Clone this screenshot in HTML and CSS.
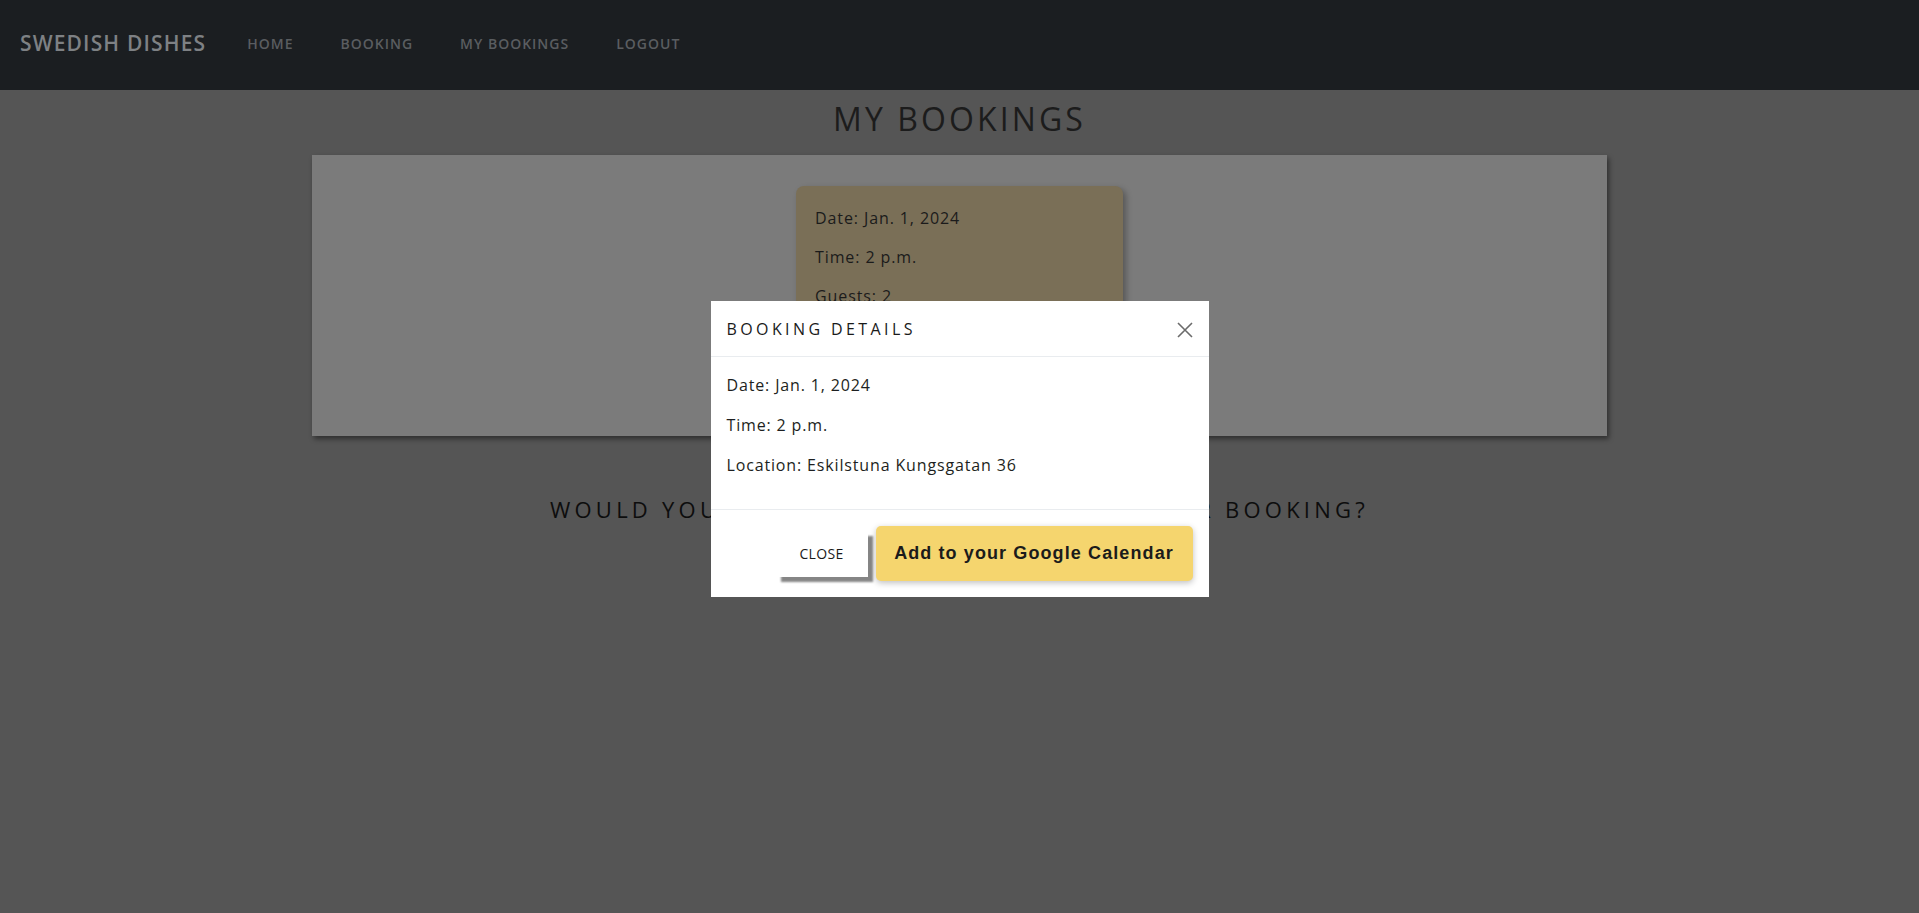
FILE: index.html
```html
<!DOCTYPE html>
<html lang="en">
<head>
<meta charset="utf-8">
<title>My Bookings - Swedish Dishes</title>
<link rel="stylesheet" href="styles.css">
</head>
<body>
<header class="navbar">
  <a class="brand" href="#">SWEDISH DISHES</a>
  <nav>
    <ul class="nav-links">
      <li><a href="#">Home</a></li>
      <li><a href="#">Booking</a></li>
      <li><a href="#">My Bookings</a></li>
      <li><a href="#">Logout</a></li>
    </ul>
  </nav>
</header>

<main class="main">
  <h1 class="page-title">MY BOOKINGS</h1>
  <section class="panel">
    <div class="booking-card">
      <p>Date: Jan. 1, 2024</p>
      <p>Time: 2 p.m.</p>
      <p>Guests: 2</p>
      <div class="card-actions">
        <button class="card-btn">Details</button>
      </div>
    </div>
  </section>
  <h2 class="sub-title">WOULD YOU LIKE TO CHANGE OR CANCEL YOUR BOOKING?</h2>
</main>

<div class="modal" role="dialog" aria-labelledby="modal-title">
  <div class="modal-header">
    <h5 class="modal-title" id="modal-title">BOOKING DETAILS</h5>
    <button class="btn-close" aria-label="Close">
      <svg width="16" height="16" viewBox="0 0 16 16"><path d="M1 1L15 15M15 1L1 15" stroke="#6b6b6b" stroke-width="1.6" fill="none"/></svg>
    </button>
  </div>
  <div class="modal-body">
    <p>Date: Jan. 1, 2024</p>
    <p>Time: 2 p.m.</p>
    <p>Location: Eskilstuna Kungsgatan 36</p>
  </div>
  <div class="modal-footer">
    <button class="btn-close-text">CLOSE</button>
    <button class="btn-google">Add to your Google Calendar</button>
  </div>
</div>
</body>
</html>
```
FILE: styles.css
```css
* { box-sizing: border-box; }
html, body { height: 100%; }
body {
  margin: 0;
  background: #555555;
  font-family: "Open Sans", "Noto Sans", sans-serif;
  color: #1a1a1a;
  overflow: hidden;
}

.navbar {
  height: 90px;
  background: #1b1e21;
  display: flex;
  align-items: center;
  padding-left: 20px;
  padding-bottom: 4px;
}
.brand {
  color: #7e8184;
  font-size: 21px;
  text-decoration: none;
  letter-spacing: 1.15px;
  font-weight: 600;
}
.nav-links {
  list-style: none;
  margin: 0 0 0 41px;
  padding: 0;
  display: flex;
  gap: 47px;
}
.nav-links a {
  color: #5a5d60;
  text-decoration: none;
  text-transform: uppercase;
  font-size: 14px;
  font-weight: 600;
  letter-spacing: 1px;
}

.main {
  padding-top: 8px;
}
.page-title {
  margin: 0;
  text-align: center;
  font-size: 32px;
  line-height: 42px;
  font-weight: 400;
  letter-spacing: 3.1px;
  color: #1c1c1c;
}
.panel {
  width: 1295px;
  margin: 15px auto 0;
  background: #7b7b7b;
  padding: 31px 0;
  box-shadow: 2px 3px 5px rgba(0,0,0,0.45);
}
.booking-card {
  width: 327px;
  margin: 0 auto;
  background: #7a6f57;
  border-radius: 8px;
  padding: 20px 19px;
  box-shadow: 3px 3px 6px rgba(0,0,0,0.3);
  height: 219px;
}
.booking-card p {
  margin: 0 0 15px;
  font-size: 16px;
  line-height: 24px;
  letter-spacing: 0.9px;
  color: #1b1b1b;
}
.card-btn {
  font: inherit;
  border: 0;
  background: transparent;
}
.sub-title {
  margin: 60px 0 0;
  text-align: center;
  font-size: 22px;
  line-height: 26px;
  font-weight: 400;
  letter-spacing: 4.25px;
  color: #0d0d0d;
}

.modal {
  position: fixed;
  top: 301px;
  left: 50%;
  width: 498px;
  margin-left: -249px;
  background: #ffffff;
  color: #212529;
}
.modal-header {
  height: 56px;
  padding: 0 16px;
  display: flex;
  align-items: center;
  justify-content: space-between;
  border-bottom: 1px solid #e9ecef;
}
.modal-title {
  margin: 0;
  font-size: 16px;
  font-weight: 400;
  letter-spacing: 3.4px;
  color: #1a1a1a;
}
.btn-close {
  border: 0;
  background: transparent;
  padding: 0;
  width: 16px;
  height: 16px;
  display: flex;
  margin-top: 2px;
}
.modal-body {
  padding: 16px;
}
.modal-body p {
  margin: 0 0 16px;
  font-size: 16px;
  line-height: 24px;
  letter-spacing: 0.85px;
  color: #1d1f21;
}
.modal-footer {
  border-top: 1px solid #e9ecef;
  padding: 16px;
  display: flex;
  justify-content: flex-end;
  align-items: center;
  gap: 8px;
}
.btn-close-text {
  width: 92px;
  height: 46px;
  border: 0;
  background: #ffffff;
  font-family: "Open Sans", "Noto Sans", sans-serif;
  font-size: 14px;
  color: #1a1a1a;
  letter-spacing: 0.3px;
  box-shadow: 5px 5px 2px rgba(0,0,0,0.48);
}
.btn-google {
  width: 317px;
  height: 55px;
  border: 0;
  border-radius: 5px;
  background: #f5d56e;
  font-family: "Liberation Sans", Arial, sans-serif;
  font-weight: 700;
  font-size: 18px;
  letter-spacing: 1.1px;
  color: #1b1b1b;
  box-shadow: 0 2px 6px rgba(0,0,0,0.25);
}
```
